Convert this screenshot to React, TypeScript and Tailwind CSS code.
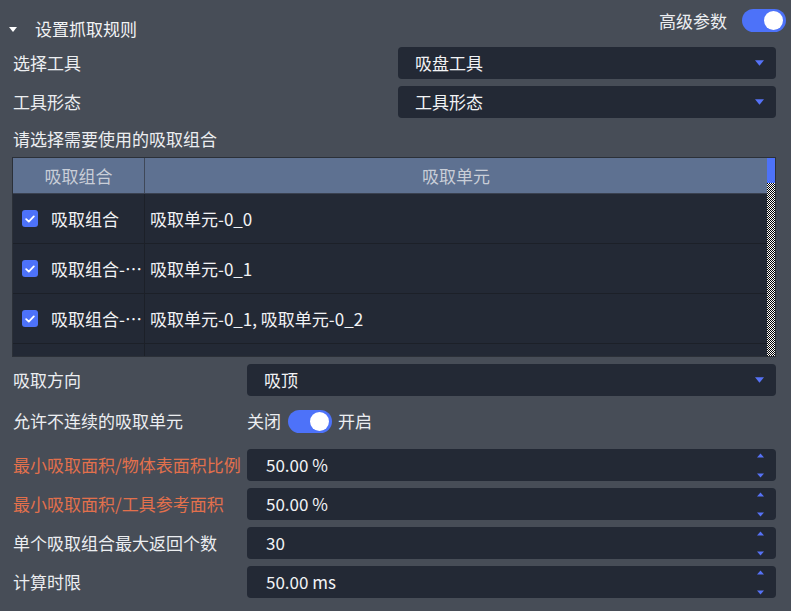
import React from "react";

const FONT = '"Noto Sans CJK SC", "Noto Sans", sans-serif';

function Tri({ up = false, w = 9, h = 6 }: { up?: boolean; w?: number; h?: number }) {
  return (
    <svg width={w} height={h} viewBox="0 0 10 6" className="block">
      <polygon points={up ? "0,6 10,6 5,0" : "0,0 10,0 5,6"} fill="#5672f6" />
    </svg>
  );
}

function Toggle() {
  return (
    <div className="w-[44px] h-[23px] rounded-full bg-[#4d72f9] flex items-center justify-end pr-[3px]">
      <div className="w-[19px] h-[19px] rounded-full bg-white" />
    </div>
  );
}

function Select({ value }: { value: string }) {
  return (
    <div className="flex-1 h-[32px] rounded-[4px] bg-[#232935] flex items-center pl-[17px] pr-[12px]">
      <span className="flex-1 text-[#f2f3f5]">{value}</span>
      <Tri />
    </div>
  );
}

function NumberInput({ value }: { value: string }) {
  return (
    <div className="flex-1 h-[32px] rounded-[4px] bg-[#232935] flex items-center pl-[19px] pr-[12px]">
      <span className="flex-1 text-[#f2f3f5]">{value}</span>
      <div className="flex flex-col justify-between h-[25px]">
        <Tri up w={7} h={5} />
        <Tri w={7} h={5} />
      </div>
    </div>
  );
}

function Check() {
  return (
    <div className="w-[16px] h-[17px] rounded-[3px] bg-[#4d72f9] flex items-center justify-center shrink-0">
      <svg width="10" height="8" viewBox="0 0 10 8">
        <path d="M1.2 4.2 L3.8 6.6 L8.8 1.4" stroke="white" strokeWidth="1.8" fill="none" strokeLinecap="round" strokeLinejoin="round" />
      </svg>
    </div>
  );
}

const rows = [
  { a: "吸取组合", b: "吸取单元-0_0" },
  { a: "吸取组合-1-0", b: "吸取单元-0_1" },
  { a: "吸取组合-2-0", b: "吸取单元-0_1, 吸取单元-0_2" },
];

function LabelRow({
  label,
  red = false,
  children,
  split = 247,
}: {
  label: string;
  red?: boolean;
  children: React.ReactNode;
  split?: number;
}) {
  return (
    <div className="flex items-center h-[32px]">
      <div
        className={`shrink-0 pl-[13px] ${red ? "text-[#e2704c]" : "text-[#eceef1]"}`}
        style={{ width: split }}
      >
        {label}
      </div>
      {children}
    </div>
  );
}

export default function App() {
  return (
    <div
      className="w-[791px] h-[611px] bg-[#474d57] text-[17px] leading-[20px] overflow-hidden"
      style={{ fontFamily: FONT }}
    >
      <div className="pr-[15px]">
        {/* Header */}
        <div className="flex justify-between h-[47px]">
          <div className="flex items-center pt-[19px] h-[39px] self-start">
            <div className="pl-[9px] w-[35px]">
              <svg width="8" height="5" viewBox="0 0 8 5" className="block">
                <polygon points="0,0 8,0 4,5" fill="#ffffff" />
              </svg>
            </div>
            <span className="text-[#f2f3f5]">设置抓取规则</span>
          </div>
          <div className="flex items-center gap-[15px] h-[23px] mt-[9px] mr-[-10px]">
            <span className="text-[#eceef1]">高级参数</span>
            <Toggle />
          </div>
        </div>

        <LabelRow label="选择工具" split={398}>
          <Select value="吸盘工具" />
        </LabelRow>
        <div className="h-[7px]" />
        <LabelRow label="工具形态" split={398}>
          <Select value="工具形态" />
        </LabelRow>

        <div className="pl-[13px] pt-[11px] h-[39px] text-[#eceef1]">请选择需要使用的吸取组合</div>

        {/* Table */}
        <div className="ml-[12px] h-[200px] border border-[#2b3038] flex overflow-hidden">
          <div className="flex-1 flex flex-col min-w-0">
            <div className="h-[36px] shrink-0 flex bg-[#5e7191] border-b border-[#3a4150] text-[#c9ced8]">
              <div className="w-[132px] shrink-0 flex items-center justify-center border-r border-[#3f4858]">吸取组合</div>
              <div className="flex-1 flex items-center justify-center">吸取单元</div>
            </div>
            {[...rows, { a: "", b: "" }].map((r, i) => (
              <div key={i} className="h-[50px] shrink-0 flex bg-[#232935] border-b border-[#1c2028] text-[#f2f3f5]">
                <div className="w-[132px] shrink-0 flex items-center pl-[9px] border-r border-[#1c2028] min-w-0">
                  {r.a && <Check />}
                  <span className="ml-[13px] truncate min-w-0">{r.a}</span>
                </div>
                <div className="flex-1 flex items-center pl-[5px]">{r.b}</div>
              </div>
            ))}
          </div>
          <div className="w-[8px] shrink-0 flex flex-col bg-[repeating-conic-gradient(#000_0%_25%,#fff_0%_50%)] bg-[length:2px_2px]">
            <div className="h-[25px] bg-[#4d72f9]" />
          </div>
        </div>

        <div className="h-[7px]" />
        <LabelRow label="吸取方向">
          <Select value="吸顶" />
        </LabelRow>

        <div className="mt-[9px]">
          <LabelRow label="允许不连续的吸取单元">
            <div className="flex items-center text-[#eceef1]">
              <span>关闭</span>
              <div className="ml-[7px] mr-[6px]">
                <Toggle />
              </div>
              <span>开启</span>
            </div>
          </LabelRow>
        </div>

        <div className="mt-[12px] flex flex-col gap-[7px]">
          <LabelRow label="最小吸取面积/物体表面积比例" red>
            <NumberInput value="50.00 %" />
          </LabelRow>
          <LabelRow label="最小吸取面积/工具参考面积" red>
            <NumberInput value="50.00 %" />
          </LabelRow>
          <LabelRow label="单个吸取组合最大返回个数">
            <NumberInput value="30" />
          </LabelRow>
          <LabelRow label="计算时限">
            <NumberInput value="50.00 ms" />
          </LabelRow>
        </div>
      </div>
    </div>
  );
}
